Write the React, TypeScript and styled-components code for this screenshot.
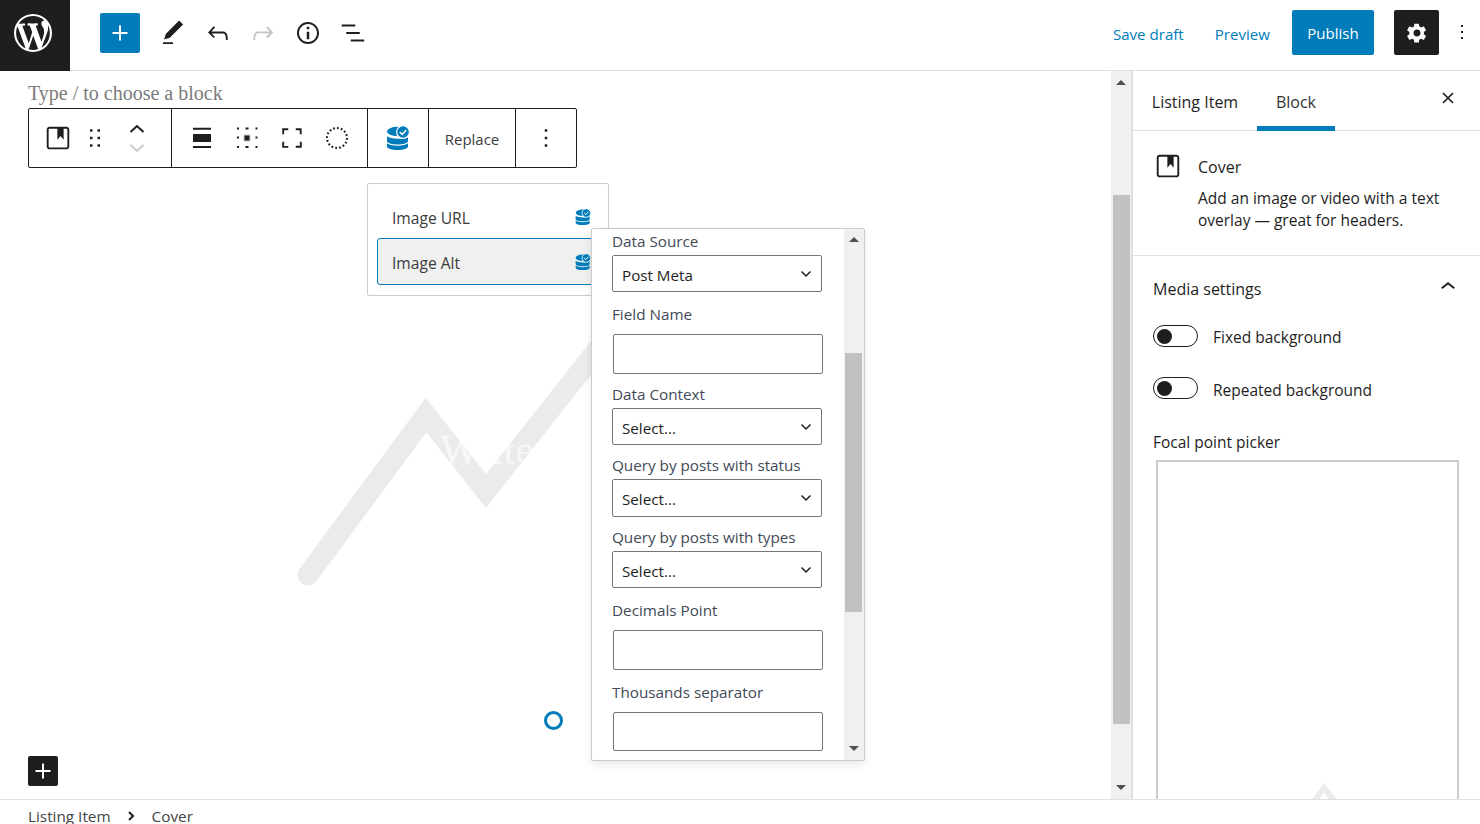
import styled, { createGlobalStyle } from 'styled-components';

const Global = createGlobalStyle`
  html, body { margin: 0; padding: 0; background: #fff; }
  * { box-sizing: border-box; }
  body {
    font-family: "Open Sans", "Noto Sans", sans-serif;
    font-size: 14px;
    color: #1e1e1e;
  }
`;

const Icon = ({ d, size = 30, color = 'currentColor' }: { d: string; size?: number; color?: string }) => (
  <svg width={size} height={size} viewBox="0 0 24 24" fill={color}>
    <path d={d} />
  </svg>
);

const PLUS = 'M18 11.2h-5.2V6h-1.6v5.2H6v1.6h5.2V18h1.6v-5.2H18z';
const PENCIL = 'M20.1 5.1L16.9 2 6.2 12.7l-1.3 4.4 4.5-1.3L20.1 5.1zM4 20.8h8v-1.5H4v1.5z';
const UNDO = 'M18.3 11.7c-.6-.6-1.4-.9-2.3-.9H6.7l2.9-3.3-1.1-1-4.5 5L8.5 16l1-1-2.7-2.7H16c.5 0 .9.2 1.3.5 1 1 1 3.4 1 4.5v.3h1.5v-.2c0-1.5 0-4.3-1.5-5.7z';
const REDO = 'M15.6 6.5l-1.1 1 2.9 3.3H8c-.9 0-1.7.3-2.3.9-1.4 1.5-1.4 4.2-1.4 5.6v.2h1.5v-.3c0-1.1 0-3.5 1-4.5.3-.3.7-.5 1.3-.5h9.2L14.5 15l1.1 1.1 4.6-4.6-4.6-5z';
const INFO = 'M12 3.2c-4.8 0-8.8 3.9-8.8 8.8 0 4.8 3.9 8.8 8.8 8.8 4.8 0 8.8-3.9 8.8-8.8 0-4.8-4-8.8-8.8-8.8zm0 16c-4 0-7.2-3.3-7.2-7.2C4.8 8 8 4.8 12 4.8s7.2 3.3 7.2 7.2c0 4-3.2 7.2-7.2 7.2zM11 17h2v-6h-2v6zm0-8h2V7h-2v2z';
const LIST = 'M13.8 5.2H3v1.5h10.8V5.2zm-3.6 12v1.5H21v-1.5H10.2zm7.2-6H6.6v1.5h10.8v-1.5z';
const COG = 'M18 12c0-.3 0-.6-.1-.9l1.9-1.5-2-3.4-2.3 1c-.5-.4-1-.7-1.6-.9L13.6 4h-3.9l-.3 2.4c-.6.2-1.1.5-1.6.9l-2.3-1-2 3.4 2 1.5c0 .3-.1.6-.1.9s0 .6.1.9l-2 1.5 2 3.4 2.3-1c.5.4 1 .7 1.6.9l.3 2.4h3.9l.3-2.4c.6-.2 1.1-.5 1.6-.9l2.3 1 2-3.4-2-1.5c.1-.3.1-.6.1-.9zm-6 3c-1.7 0-3-1.3-3-3s1.3-3 3-3 3 1.3 3 3-1.3 3-3 3z';
const MORE = 'M13 19h-2v-2h2v2zm0-6h-2v-2h2v2zm0-6h-2V5h2v2z';
const COVER = 'M18.7 3H5.3C4 3 3 4 3 5.3v13.4C3 20 4 21 5.3 21h13.4c1.3 0 2.3-1 2.3-2.3V5.3C21 4 20 3 18.7 3zm.8 15.7c0 .4-.4.8-.8.8H5.3c-.4 0-.8-.4-.8-.8V5.3c0-.4.4-.8.8-.8h6.2v8.9l2.5-3.1 2.5 3.1V4.5h2.2c.4 0 .8.4.8.8v13.4z';
const DRAG = 'M8 7h2V5H8v2zm0 6h2v-2H8v2zm0 6h2v-2H8v2zm6-14v2h2V5h-2zm0 8h2v-2h-2v2zm0 6h2v-2h-2v2z';
const FULL = 'M4.2 9h1.5V5.7H9V4.2H4.2V9zm14 9.2H15v1.5h4.8V15h-1.5v3.2zM15 4.2v1.5h3.2V9h1.5V4.2H15zM5.7 15H4.2v4.8H9v-1.5H5.7V15z';
const CHEV_UP = 'M6.5 12.4L12 8l5.5 4.4-.9 1.2L12 10l-4.5 3.6-1-1.2z';
const WP = 'M20 10c0-5.51-4.49-10-10-10C4.48 0 0 4.49 0 10c0 5.52 4.48 10 10 10 5.51 0 10-4.48 10-10zM7.78 15.37L4.37 6.22c.55-.02 1.17-.08 1.17-.08.5-.06.44-1.13-.06-1.11 0 0-1.45.11-2.37.11-.18 0-.37 0-.58-.01C4.12 2.69 6.87 1.11 10 1.11c2.33 0 4.45.87 6.05 2.34-.68-.11-1.65.39-1.65 1.58 0 .74.45 1.36.9 2.1.35.61.55 1.36.55 2.46 0 1.49-1.4 5-1.4 5l-3.03-8.37c.54-.02.82-.17.82-.17.5-.05.44-1.25-.06-1.22 0 0-1.44.12-2.38.12-.87 0-2.33-.12-2.33-.12-.5-.03-.56 1.2-.06 1.22l.92.08 1.26 3.41zM17.41 10c.24-.64.74-1.87.43-4.25.7 1.29 1.05 2.71 1.05 4.25 0 3.29-1.73 6.24-4.4 7.78.97-2.59 1.94-5.2 2.92-7.78zM6.1 18.09C3.12 16.65 1.11 13.53 1.11 10c0-1.3.23-2.48.72-3.59C3.25 10.3 4.67 14.2 6.1 18.09zm4.03-6.63l2.58 6.98c-.86.29-1.76.45-2.71.45-.79 0-1.57-.11-2.29-.33.81-2.38 1.62-4.74 2.42-7.1z';

const DbIcon = ({ size = 24 }: { size?: number }) => (
  <svg width={size} height={size} viewBox="0 0 24 24">
    <path fill="#007cba" d="M1 17.200c2 1.600 5.600 2.500 10.500 2.500s8.500-.9 10.500-2.500v3.300c0 2.200-4.700 3.500-10.500 3.500S1 22.700 1 20.500z" />
    <path fill="#007cba" d="M1 10.200c2 1.600 5.600 2.500 10.500 2.500 2 0 3.800-.1 5.300-.5 1.500.4 3.600.1 5.200-1.300v4.100c0 2.200-4.700 3.500-10.500 3.500S1 17.200 1 15z" />
    <ellipse cx="11.500" cy="5.500" rx="10.500" ry="4.700" fill="#007cba" />
    <circle cx="17" cy="6" r="6.400" fill="#007cba" stroke="#fff" strokeWidth="1.200" />
    <path d="M13.700 6l2.500 2.400 4-4.400" fill="none" stroke="#fff" strokeWidth="1.500" />
  </svg>
);

const MatrixIcon = () => (
  <svg width={24} height={24} viewBox="0 0 24 24" fill="#1e1e1e">
    <rect x="2" y="1.500" width="2" height="2" />
    <rect x="10.500" y="1.500" width="3" height="2" />
    <rect x="20.500" y="1.500" width="2" height="2" />
    <rect x="2" y="10.500" width="2" height="2" />
    <rect x="8.500" y="8.500" width="7" height="7" fill="#ccc" />
    <rect x="9.500" y="9.500" width="5" height="5" />
    <rect x="20.500" y="10.500" width="2" height="2" />
    <rect x="2" y="20" width="2" height="2" />
    <rect x="10.500" y="20" width="3" height="2" />
    <rect x="20.500" y="20" width="2" height="2" />
  </svg>
);

const Page = styled.div`
  width: 1480px;
  height: 824px;
  display: flex;
  flex-direction: column;
  overflow: hidden;
`;

const Header = styled.header`
  height: 71px;
  flex: none;
  display: flex;
  align-items: flex-start;
  border-bottom: 1px solid #e0e0e0;
`;

const Logo = styled.div`
  width: 70px;
  height: 71px;
  padding: 14px 0 0 14px;
  background: #1e1e1e;
`;

const InserterButton = styled.div`
  width: 40px;
  height: 40px;
  margin: 13px 10px 0 30px;
  border-radius: 2px;
  background: #007cba;
  color: #fff;
  display: flex;
  align-items: center;
  justify-content: center;
`;

const HeaderIcon = styled.div<{ $muted?: boolean }>`
  width: 45px;
  height: 66px;
  display: flex;
  align-items: center;
  justify-content: center;
  color: ${(p) => (p.$muted ? '#c4c4c4' : '#1e1e1e')};
`;

const HeaderRight = styled.div`
  margin-left: auto;
  padding: 10px 6px 0 0;
  display: flex;
  align-items: flex-start;
`;

const LinkButton = styled.span<{ $gap: number }>`
  margin-right: ${(p) => p.$gap}px;
  line-height: 49px;
  color: #007cba;
  font-size: 15.100px;
`;

const PublishButton = styled.div`
  width: 82px;
  height: 45px;
  margin-right: 20px;
  border-radius: 2px;
  background: #007cba;
  color: #fff;
  font-size: 15px;
  font-weight: 500;
  display: flex;
  align-items: center;
  justify-content: center;
`;

const SettingsButton = styled.div`
  width: 45px;
  height: 45px;
  margin-right: 11px;
  border-radius: 2px;
  background: #1e1e1e;
  color: #fff;
  display: flex;
  align-items: center;
  justify-content: center;
`;

const MoreDots = styled.div`
  width: 24px;
  height: 45px;
  display: flex;
  align-items: center;
  justify-content: center;
  margin-top: -1px;
`;

const Main = styled.div`
  flex: 1;
  min-height: 0;
  display: flex;
`;

const Editor = styled.div`
  position: relative;
  width: 1111px;
  flex: none;
  overflow: hidden;
`;

const Placeholder = styled.div`
  padding: 9px 0 0 28px;
  font-family: "Liberation Serif", serif;
  font-size: 20px;
  line-height: 26px;
  color: #7b7b7b;
`;

const CoverChart = styled.svg`
  position: absolute;
  left: 280px;
  top: 250px;
`;

const CoverTitle = styled.div`
  position: absolute;
  left: 440px;
  top: 352px;
  font-family: "Liberation Serif", serif;
  font-size: 42px;
  line-height: 54px;
  color: rgba(255, 255, 255, 0.65);
  white-space: nowrap;
`;

const BlockToolbar = styled.div`
  position: absolute;
  left: 28px;
  top: 37px;
  height: 60px;
  display: flex;
  background: #fff;
  border: 1px solid #1e1e1e;
  border-radius: 2px;
`;

const ToolGroup = styled.div<{ $w: number; $pad?: number }>`
  width: ${(p) => p.$w}px;
  padding-left: ${(p) => p.$pad ?? 0}px;
  display: flex;
  align-items: center;
  border-right: 1px solid #1e1e1e;
  &:last-child { border-right: 0; }
`;

const Tool = styled.div<{ $w: number }>`
  width: ${(p) => p.$w}px;
  height: 100%;
  display: flex;
  align-items: center;
  justify-content: center;
`;

const Mover = styled.div`
  display: flex;
  flex-direction: column;
  align-items: center;
  gap: 11px;
`;

const ReplaceLabel = styled.span`
  width: 100%;
  padding-top: 2px;
  text-align: center;
  color: #3c3c3c;
  font-size: 15px;
`;

const BindingList = styled.div`
  position: absolute;
  left: 367px;
  top: 112px;
  width: 242px;
  height: 113px;
  padding: 8px 9px;
  background: #fff;
  border: 1px solid #ccc;
  border-radius: 2px;
`;

const BindingItem = styled.div<{ $active?: boolean }>`
  height: 47px;
  padding: 2px 7px 0 14px;
  display: flex;
  align-items: center;
  justify-content: space-between;
  color: #3c3c3c;
  font-size: 15.600px;
  border-radius: 3px;
  border: 1px solid ${(p) => (p.$active ? '#007cba' : 'transparent')};
  background: ${(p) => (p.$active ? '#f0f0f0' : 'transparent')};
  svg { margin-top: -2px; }
  &:first-child {
    height: 46px;
    padding-top: 5px;
  }
`;

const BindingPanel = styled.div`
  position: absolute;
  left: 591px;
  top: 157px;
  width: 274px;
  height: 533px;
  display: flex;
  background: #fff;
  border: 1px solid #ccc;
  border-radius: 2px;
  box-shadow: 0 3px 8px rgba(0, 0, 0, 0.1);
`;

const PanelBody = styled.div`
  flex: 1;
  padding: 2px 0 0 20px;
  display: flex;
  flex-direction: column;
`;

const Field = styled.div<{ $top: number }>`
  margin-top: ${(p) => p.$top}px;
  display: flex;
  flex-direction: column;
  align-items: flex-start;
`;

const FieldLabel = styled.label`
  height: 20px;
  line-height: 20px;
  font-size: 15.250px;
  color: #3f4a57;
`;

const FakeSelect = styled.div<{ $h: number }>`
  width: 210px;
  height: ${(p) => p.$h}px;
  margin-top: 4px;
  padding: 2px 9px 0 9px;
  display: flex;
  align-items: center;
  justify-content: space-between;
  border: 1px solid #757575;
  border-radius: 2px;
  font-size: 15.200px;
  color: #1e1e1e;
  svg { margin-top: -2px; }
`;

const TextInput = styled.input<{ $h: number }>`
  width: 210px;
  height: ${(p) => p.$h}px;
  margin: 10px 0 0 1px;
  padding: 0 8px;
  background: #fff;
  border: 1px solid #757575;
  border-radius: 2px;
`;

const ScrollTrack = styled.div<{ $w: number; $edge?: boolean }>`
  position: relative;
  width: ${(p) => p.$w}px;
  flex: none;
  background: #f0f0f0;
  border-right: ${(p) => (p.$edge ? '1px solid #e0e0e0' : '0')};
`;

const ScrollThumb = styled.div<{ $top: number; $h: number; $left: number; $w: number }>`
  position: absolute;
  left: ${(p) => p.$left}px;
  top: ${(p) => p.$top}px;
  width: ${(p) => p.$w}px;
  height: ${(p) => p.$h}px;
  background: #c1c1c1;
`;

const ScrollArrow = styled.div<{ $down?: boolean; $y: number; $left: number }>`
  position: absolute;
  left: ${(p) => p.$left}px;
  top: ${(p) => p.$y}px;
  width: 0;
  height: 0;
  border-left: 5px solid transparent;
  border-right: 5px solid transparent;
  ${(p) => (p.$down ? 'border-top: 5px solid #505050;' : 'border-bottom: 5px solid #505050;')}
`;

const SpinnerRing = styled.div`
  position: absolute;
  left: 544px;
  top: 640px;
  width: 19px;
  height: 19px;
  border: 3px solid #007cba;
  border-radius: 50%;
  background: #fff;
`;

const AddBlock = styled.div`
  position: absolute;
  left: 28px;
  top: 685px;
  width: 30px;
  height: 30px;
  border-radius: 2px;
  background: #1e1e1e;
  color: #fff;
  display: flex;
  align-items: center;
  justify-content: center;
`;

const Sidebar = styled.aside`
  flex: 1;
  min-width: 0;
  overflow: hidden;
  border-left: 1px solid #e0e0e0;
`;

const Tabs = styled.div`
  height: 60px;
  display: flex;
  align-items: center;
  border-bottom: 1px solid #e0e0e0;
`;

const Tab = styled.div<{ $active?: boolean; $w: number }>`
  width: ${(p) => p.$w}px;
  height: 60px;
  line-height: 62px;
  text-align: center;
  font-size: 16px;
  font-weight: 500;
  color: ${(p) => (p.$active ? '#333' : '#1e1e1e')};
  border-bottom: ${(p) => (p.$active ? '5px solid #007cba' : '0')};
`;

const CloseIcon = styled.svg`
  margin: -5px 26px 0 auto;
`;

const BlockCard = styled.section`
  height: 125px;
  padding: 20px 20px 0 20px;
  display: flex;
  gap: 15px;
  border-bottom: 1px solid #e0e0e0;
`;

const CardBody = styled.div`
  padding-top: 3px;
`;

const CardTitle = styled.div`
  height: 26px;
  line-height: 26px;
  font-weight: 500;
  font-size: 16px;
`;

const CardText = styled.div`
  margin-top: 7px;
  font-size: 15.500px;
  line-height: 22px;
  white-space: nowrap;
`;

const Settings = styled.section`
  padding: 20px 20px 0 20px;
`;

const SettingsHead = styled.div`
  height: 26px;
  display: flex;
  align-items: center;
  justify-content: space-between;
  font-size: 16px;
  font-weight: 500;
`;

const CollapseIcon = styled.span`
  height: 30px;
  margin-right: -3px;
  margin-top: -4px;
`;

const ToggleRow = styled.div<{ $top: number }>`
  margin-top: ${(p) => p.$top}px;
  display: flex;
  align-items: center;
  gap: 15px;
  font-size: 15.500px;
  height: 22px;
`;

const ToggleText = styled.span<{ $shift: number }>`
  margin-top: ${(p) => p.$shift}px;
`;

const Toggle = styled.div`
  position: relative;
  width: 45px;
  height: 22px;
  border: 1px solid #1e1e1e;
  border-radius: 11px;
  &::after {
    content: '';
    position: absolute;
    left: 3px;
    top: 3px;
    width: 15px;
    height: 15px;
    border-radius: 50%;
    background: #1e1e1e;
  }
`;

const PickerLabel = styled.div`
  margin-top: 33px;
  height: 20px;
  line-height: 20px;
  font-size: 15.500px;
`;

const Picker = styled.div`
  position: relative;
  width: 303px;
  height: 420px;
  margin: 8px 0 0 3px;
  border: 2px solid #ccc;
  border-bottom: 0;
`;

const PickerChart = styled.svg`
  position: absolute;
  left: 0;
  top: 0;
`;

const Footer = styled.footer`
  height: 25px;
  flex: none;
  padding-left: 28px;
  display: flex;
  align-items: flex-start;
  border-top: 1px solid #e0e0e0;
  font-size: 15.300px;
  line-height: 32px;
  color: #444;
`;

const Crumb = styled.span``;

const CrumbChevron = styled.span`
  width: 41px;
  height: 24px;
  margin-top: 11px;
  display: flex;
  justify-content: center;
`;

const ChevronSmall = () => (
  <svg width={12} height={8} viewBox="0 0 12 8" fill="none" stroke="#1e1e1e" strokeWidth="1.500">
    <polyline points="1.500,1.500 6,6 10.500,1.500" />
  </svg>
);

const selectField = (label: string, value: string, top: number, h: number) => (
  <Field $top={top} key={label}>
    <FieldLabel>{label}</FieldLabel>
    <FakeSelect $h={h}>
      {value}
      <ChevronSmall />
    </FakeSelect>
  </Field>
);

const inputField = (label: string, top: number, h: number) => (
  <Field $top={top} key={label}>
    <FieldLabel>{label}</FieldLabel>
    <TextInput $h={h} />
  </Field>
);

export default function App() {
  return (
    <Page>
      <Global />
      <Header>
        <Logo>
          <svg width={38} height={38} viewBox="0 0 20 20" fill="#fff">
            <path d={WP} />
          </svg>
        </Logo>
        <InserterButton>
          <Icon d={PLUS} />
        </InserterButton>
        <HeaderIcon><Icon d={PENCIL} /></HeaderIcon>
        <HeaderIcon><Icon d={UNDO} /></HeaderIcon>
        <HeaderIcon $muted><Icon d={REDO} /></HeaderIcon>
        <HeaderIcon><Icon d={INFO} /></HeaderIcon>
        <HeaderIcon><Icon d={LIST} /></HeaderIcon>
        <HeaderRight>
          <LinkButton $gap={31}>Save draft</LinkButton>
          <LinkButton $gap={22}>Preview</LinkButton>
          <PublishButton>Publish</PublishButton>
          <SettingsButton><Icon d={COG} size={28} /></SettingsButton>
          <MoreDots><Icon d={MORE} /></MoreDots>
        </HeaderRight>
      </Header>

      <Main>
        <Editor>
          <Placeholder>Type / to choose a block</Placeholder>
          <CoverChart width="400" height="300" fill="none">
            <polyline
              points="28,254 146,94 206,170 340,0"
              stroke="#ebebeb"
              strokeWidth="21"
              strokeLinecap="round"
              strokeMiterlimit="10"
            />
          </CoverChart>
          <CoverTitle>Write</CoverTitle>
          <BlockToolbar>
            <ToolGroup $w={143} $pad={7}>
              <Tool $w={44}><Icon d={COVER} /></Tool>
              <Tool $w={30}><Icon d={DRAG} /></Tool>
              <Tool $w={54}>
                <Mover>
                  <svg width={16} height={9} viewBox="0 0 16 9" fill="none" stroke="#1e1e1e" strokeWidth="2">
                    <polyline points="1.500,8 8,2 14.500,8" />
                  </svg>
                  <svg width={16} height={9} viewBox="0 0 16 9" fill="none" stroke="#ccc" strokeWidth="2">
                    <polyline points="1.500,1 8,7 14.500,1" />
                  </svg>
                </Mover>
              </Tool>
            </ToolGroup>
            <ToolGroup $w={196} $pad={7}>
              <Tool $w={45}>
                <svg width={24} height={24} viewBox="0 0 24 24" fill="#1e1e1e">
                  <path d="M3 1.700h18v2H3zM3 8h18v8H3zM3 20h18v2H3z" />
                </svg>
              </Tool>
              <Tool $w={45}><MatrixIcon /></Tool>
              <Tool $w={45}><Icon d={FULL} /></Tool>
              <Tool $w={45}>
                <svg width={24} height={24} viewBox="0 0 24 24" fill="none">
                  <circle cx="12" cy="12" r="10" stroke="#1e1e1e" strokeWidth="2" strokeDasharray="1.800 2.100" />
                </svg>
              </Tool>
            </ToolGroup>
            <ToolGroup $w={61}>
              <Tool $w={60}><DbIcon /></Tool>
            </ToolGroup>
            <ToolGroup $w={87}>
              <ReplaceLabel>Replace</ReplaceLabel>
            </ToolGroup>
            <ToolGroup $w={60}>
              <Tool $w={60}><Icon d={MORE} /></Tool>
            </ToolGroup>
          </BlockToolbar>

          <BindingList>
            <BindingItem>Image URL<DbIcon size={16} /></BindingItem>
            <BindingItem $active>Image Alt<DbIcon size={16} /></BindingItem>
          </BindingList>

          <BindingPanel>
            <PanelBody>
              {selectField('Data Source', 'Post Meta', 0, 37)}
              {inputField('Field Name', 12, 40)}
              {selectField('Data Context', 'Select...', 10, 37)}
              {selectField('Query by posts with status', 'Select...', 10, 38)}
              {selectField('Query by posts with types', 'Select...', 10, 37)}
              {inputField('Decimals Point', 12, 40)}
              {inputField('Thousands separator', 12, 39)}
            </PanelBody>
            <ScrollTrack $w={20}>
              <ScrollArrow $y={8} $left={5} />
              <ScrollThumb $left={1} $w={17} $top={124} $h={259} />
              <ScrollArrow $down $y={517} $left={5} />
            </ScrollTrack>
          </BindingPanel>

          <SpinnerRing />
          <AddBlock><Icon d={PLUS} /></AddBlock>
        </Editor>

        <ScrollTrack $w={21} $edge>
          <ScrollArrow $y={9} $left={5} />
          <ScrollThumb $left={2} $w={17} $top={124} $h={529} />
          <ScrollArrow $down $y={714} $left={5} />
        </ScrollTrack>

        <Sidebar>
          <Tabs>
            <Tab $w={124}>Listing Item</Tab>
            <Tab $w={78} $active>Block</Tab>
            <CloseIcon width="12" height="12" viewBox="0 0 12 12" fill="none" stroke="#1e1e1e" strokeWidth="1.700">
              <path d="M1 1l10 10M11 1L1 11" />
            </CloseIcon>
          </Tabs>
          <BlockCard>
            <Icon d={COVER} />
            <CardBody>
              <CardTitle>Cover</CardTitle>
              <CardText>
                Add an image or video with a text
                <br />
                overlay — great for headers.
              </CardText>
            </CardBody>
          </BlockCard>
          <Settings>
            <SettingsHead>
              Media settings
              <CollapseIcon><Icon d={CHEV_UP} /></CollapseIcon>
            </SettingsHead>
            <ToggleRow $top={23}><Toggle /><ToggleText $shift={2}>Fixed background</ToggleText></ToggleRow>
            <ToggleRow $top={30}><Toggle /><ToggleText $shift={3}>Repeated background</ToggleText></ToggleRow>
            <PickerLabel>Focal point picker</PickerLabel>
            <Picker>
              <PickerChart width="300" height="400" fill="none">
                <polyline points="106,406 166,326 186,351" stroke="#ebebeb" strokeWidth="6" strokeMiterlimit="10" />
              </PickerChart>
            </Picker>
          </Settings>
        </Sidebar>
      </Main>

      <Footer>
        <Crumb>Listing Item</Crumb>
        <CrumbChevron>
          <svg width={8} height={10} viewBox="0 0 8 10" fill="none" stroke="#1e1e1e" strokeWidth="2">
            <polyline points="2,1 6,5 2,9" />
          </svg>
        </CrumbChevron>
        <Crumb>Cover</Crumb>
      </Footer>
    </Page>
  );
}
